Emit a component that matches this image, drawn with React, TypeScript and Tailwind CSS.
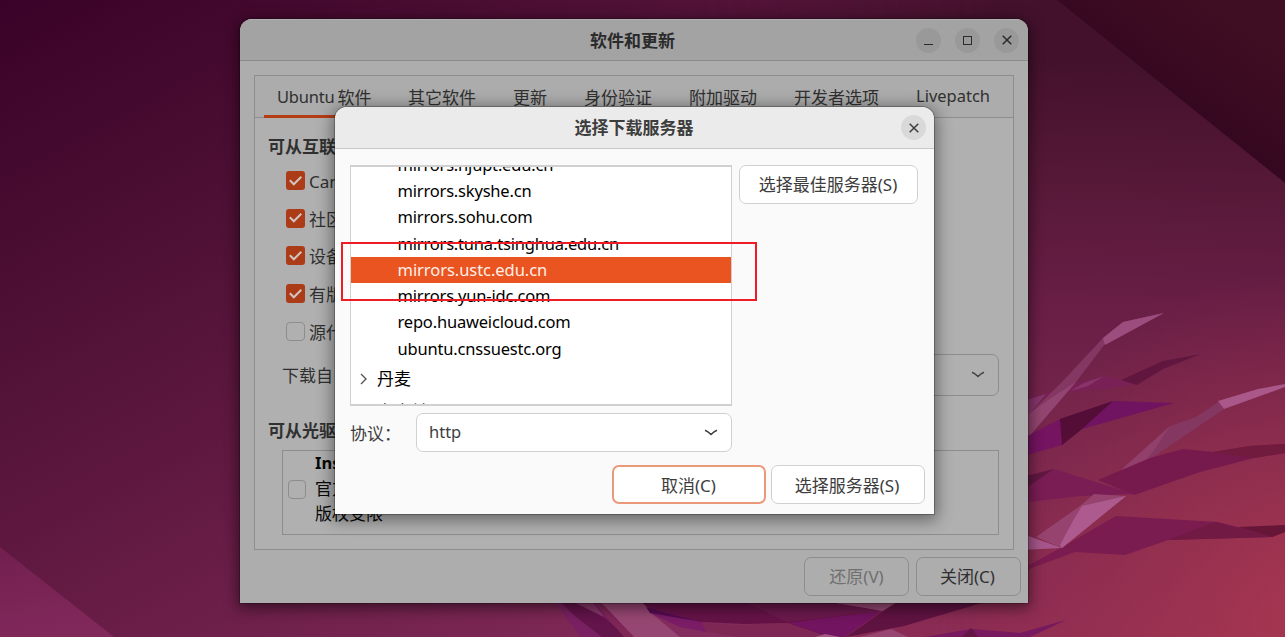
import React from "react";

const sans = "font-['Noto_Sans','Noto_Sans_CJK_SC',sans-serif]";

function Wallpaper() {
  return (
    <svg className="absolute inset-0" width="1285" height="637" viewBox="0 0 1285 637">
      <defs>
        <linearGradient id="base" gradientUnits="userSpaceOnUse" x1="0" y1="0" x2="420" y2="780">
          <stop offset="0" stopColor="#3a0228" />
          <stop offset="0.35" stopColor="#501136" />
          <stop offset="0.65" stopColor="#661c45" />
          <stop offset="1" stopColor="#822a58" />
        </linearGradient>
        <linearGradient id="right" gradientUnits="userSpaceOnUse" x1="1170" y1="60" x2="1150" y2="637">
          <stop offset="0" stopColor="#43112c" />
          <stop offset="0.2" stopColor="#551837" />
          <stop offset="0.42" stopColor="#681e45" />
          <stop offset="0.7" stopColor="#7b274e" />
          <stop offset="1" stopColor="#8d2c53" />
        </linearGradient>
        <linearGradient id="fade" gradientUnits="userSpaceOnUse" x1="700" y1="0" x2="1010" y2="0">
          <stop offset="0" stopColor="#fff" stopOpacity="0" />
          <stop offset="1" stopColor="#fff" />
        </linearGradient>
        <mask id="rightMask"><rect width="1285" height="637" fill="url(#fade)" /></mask>
        <radialGradient id="glow" gradientUnits="userSpaceOnUse" cx="1310" cy="610" r="340">
          <stop offset="0" stopColor="#b03a50" stopOpacity="0.75" />
          <stop offset="1" stopColor="#a8374d" stopOpacity="0" />
        </radialGradient>
        <linearGradient id="corner" gradientUnits="userSpaceOnUse" x1="1160" y1="85" x2="1220" y2="0">
          <stop offset="0" stopColor="#360820" />
          <stop offset="1" stopColor="#400e23" />
        </linearGradient>
        <linearGradient id="leftCorner" gradientUnits="userSpaceOnUse" x1="30" y1="550" x2="50" y2="637">
          <stop offset="0" stopColor="#732050" />
          <stop offset="1" stopColor="#81285b" />
        </linearGradient>
      </defs>
      <rect width="1285" height="637" fill="url(#base)" />
      <rect width="1285" height="637" fill="url(#right)" mask="url(#rightMask)" />
      <rect width="1285" height="637" fill="url(#glow)" />
      <polygon points="1057,0 1285,0 1285,183" fill="url(#corner)" />
      <polygon points="0,547 114,637 0,637" fill="url(#leftCorner)" />
      <polygon points="1020,400 1046,394 1062,386 1104,376 1121,380 1137,384 1102,389 1066,392 1028,400" fill="#792057" />
      <polygon points="1121,380 1163,361 1201,354 1163,369 1137,385" fill="#611640" />
      <polygon points="1070,391 1084,383 1104,376 1088,386" fill="#873569" />
      <polygon points="1020,402 1046,394 1028,416" fill="#85366c" />
      <polygon points="1020,423 1062,382 1103,338 1123,322 1163,313 1105,344 1076,382 1024,443" fill="#853763" />
      <polygon points="1103,338 1123,322 1164,313 1105,345" fill="#9d4c7e" />
      <polygon points="1020,420 1054,396 1076,382 1024,442" fill="#924570" />
      <polygon points="1020,440 1060,419 1062,445 1020,457" fill="#751461" />
      <polygon points="1060,419 1113,401 1174,403 1082,429 1062,445" fill="#701360" />
      <polygon points="1060,419 1113,401 1082,429 1062,445" fill="#540d37" />
      <polygon points="1120,471 1170,426 1196,417 1220,401 1224,409 1152,458" fill="#843760" />
      <polygon points="1120,471 1170,426 1154,450 1144,463" fill="#933f6b" />
      <polygon points="1218,401 1258,389 1285,384 1285,387 1224,409" fill="#aa5789" />
      <polygon points="1098,480 1150,458 1183,449 1213,452 1250,446 1285,444 1285,453 1254,458 1200,472 1134,495" fill="#76194c" />
      <polygon points="1213,452 1250,446 1285,444 1285,453 1254,458" fill="#711b3e" />
      <polygon points="1020,477 1054,469 1134,494 1080,496 1020,503" fill="#7a1d55" />
      <polygon points="1020,478 1054,469 1020,492" fill="#611842" />
      <polygon points="1064,546 1116,516 1218,522 1242,528 1285,525 1285,532 1272,537 1168,540 1125,555 1075,552 1026,570 1020,570" fill="#7b1c50" />
      <polygon points="1168,540 1215,522 1272,537" fill="#711a44" />
      <polygon points="1238,527 1285,525 1285,532 1272,537" fill="#681638" />
      <polygon points="1036,537 1080,506 1094,494 1126,496 1062,548" fill="#974370" />
      <polygon points="1082,506 1126,496 1062,548 1060,545 1074,519" fill="#ad5b8f" />
      <polygon points="1020,533 1062,548 1020,550" fill="#a6568a" />
      <polygon points="552,597 590,597 640,637 580,637" fill="#792062" />
      <polygon points="555,597 575,603 604,617 626,637 602,637 575,616" fill="#63144a" />
      <polygon points="568,599 590,599 604,617" fill="#873768" />
      <polygon points="590,597 597,602 634,637 624,637" fill="#7f2754" />
      <polygon points="596,597 645,597 650,612 704,637 634,637" fill="#964672" />
      <polygon points="650,612 740,622 800,637 680,637" fill="#832d5f" />
      <polygon points="636,597 890,597 858,623 840,633 808,637 788,623 745,624 700,622 647,607" fill="#651347" />
      <polygon points="735,597 790,603 840,604 882,611 786,622" fill="#6b194c" />
      <polygon points="646,607 701,622 702,626 650,613" fill="#540b50" />
      <polygon points="650,613 702,622 706,632 680,627" fill="#7b1c66" />
      <polygon points="702,623 740,625 788,623 830,637 740,637 706,632" fill="#7f2754" />
      <polygon points="788,623 882,611 845,637 832,637" fill="#72145f" />
      <polygon points="835,603 895,603 883,611" fill="#994a77" />
      <polygon points="883,611 898,602 985,602 904,626 846,637" fill="#5f1341" />
      <polygon points="925,637 971,629 1020,633 1066,620 1030,637" fill="#77195f" />
      <polygon points="962,637 971,628 978,637" fill="#631544" />
      <polygon points="815,637 825,634 840,637" fill="#a25a85" />
      <polygon points="872,634 891,629 908,637 860,637" fill="#964671" />
    </svg>
  );
}

function CloseIcon() {
  return (
    <svg width="10" height="10" viewBox="0 0 10 10" fill="none" stroke="currentColor" strokeWidth="1.5">
      <path d="M.7.7l8.6 8.6M9.3.7L.7 9.3" />
    </svg>
  );
}

function ChevronDown() {
  return (
    <svg width="14" height="8" viewBox="0 0 14 8" fill="none" stroke="currentColor" strokeWidth="1.5">
      <path d="M1 1.2c2 .8 4.3 2.600 6 4.300C8.700 3.800 11 2 13 1.200" />
    </svg>
  );
}

function Check({ label, on = false }: { label: string; on?: boolean }) {
  return (
    <div className="flex h-[37.7px] items-start">
      {on ? (
        <span className="flex h-[19px] w-[19px] shrink-0 items-center justify-center rounded-[3px] bg-[#ac3c17]">
          <svg width="13" height="10" viewBox="0 0 13 10" fill="none" stroke="#d0c5c0" strokeWidth="2">
            <path d="M.8 4.300l4 4L12.300.8" />
          </svg>
        </span>
      ) : (
        <span className="h-[19px] w-[19px] shrink-0 rounded-[4px] border border-[#8d8d8d]" />
      )}
      <span className="ml-[4px] whitespace-nowrap text-[17px] leading-[22px]">{label}</span>
    </div>
  );
}

const tabs = [
  { label: "其它软件", cls: "ml-[23px] w-[69px]" },
  { label: "更新", cls: "ml-[36px] w-[35px]" },
  { label: "身份验证", cls: "ml-[36px] w-[69px]" },
  { label: "附加驱动", cls: "ml-[36px] w-[69px]" },
  { label: "开发者选项", cls: "ml-[36px] w-[86px]" },
];

function MainWindow() {
  return (
    <div className="absolute left-[240px] top-[19px] flex h-[583.500px] w-[788px] flex-col overflow-hidden rounded-t-[12px] bg-[#adadad] text-[#303030] shadow-[0_3px_14px_2px_rgba(0,0,0,0.5),0_0_0_1px_rgba(0,0,0,0.2)]">
      <header className="flex h-[42px] shrink-0 items-center border-b border-t border-b-[#8b8b8b] border-t-[#b0b0b0] bg-[#a3a3a3] pr-[9px]">
        <div className="w-[109px]" />
        <h1 className="flex-1 pt-[2px] text-center text-[17px] font-bold leading-[24px] text-[#2b2b2b]">软件和更新</h1>
        <div className="flex gap-[14px] text-[#2b2b2b]">
          <span className="flex h-[25px] w-[25px] items-end justify-center rounded-full bg-[#999999] pb-[8px]"><i className="h-[1px] w-[9px] bg-[#2b2b2b]" /></span>
          <span className="flex h-[25px] w-[25px] items-center justify-center rounded-full bg-[#999999]"><i className="h-[9px] w-[9px] border-[1.500px] border-[#2b2b2b]" /></span>
          <span className="flex h-[25px] w-[25px] items-center justify-center rounded-full bg-[#999999]"><CloseIcon /></span>
        </div>
      </header>
      <section className="mx-[14px] mt-[14px] h-[475px] shrink-0 border border-[#8d8d8d] bg-[#b0b0b0]">
        <nav className="flex h-[42px] whitespace-nowrap border-b border-[#8d8d8d] bg-[#acacac] pl-[9px] text-[17px] leading-[43px]">
          <div className="-mb-px flex h-[42px] w-[121px] border-b-[3px] border-[#b53d14] pl-[13px]">
            <span className="text-[16.500px] leading-[42px] tracking-[-0.2px]">Ubuntu</span><span className="ml-[3px]">软件</span>
          </div>
          {tabs.map((t) => (
            <div key={t.label} className={t.cls}>{t.label}</div>
          ))}
          <div className="ml-[36px] text-[16.500px] leading-[40px]">Livepatch</div>
        </nav>
        <h2 className="ml-[13px] mt-[17px] text-[17px] font-bold leading-[24px]">可从互联网下载</h2>
        <div className="ml-[31px] mt-[12px]">
          <Check label="Canonical" on />
          <Check label="社区维护" on />
          <Check label="设备的专有驱动" on />
          <Check label="有版权问题" on />
          <Check label="源代码" />
        </div>
        <div className="-mt-[5.500px] mr-[14px] flex h-[42px] items-center justify-between pl-[27px] text-[17px]">
          <span className="pt-[2px]">下载自：</span>
          <div className="flex h-[42px] w-[300px] items-center justify-end rounded-[7px] border border-[#8d8d8d] pr-[13px] text-[#444]"><ChevronDown /></div>
        </div>
        <h2 className="ml-[13px] mt-[23px] text-[17px] font-bold leading-[24px]">可从光驱安装</h2>
        <div className="ml-[27px] mr-[14px] mt-[7px] flex h-[85.500px] items-center border border-[#8d8d8d] text-[17px] leading-[25.500px] text-[#080808]">
          <span className="ml-[5px] mt-[-7px] h-[19px] w-[18px] rounded-[4px] border border-[#8d8d8d]" />
          <div className="ml-[9px] mt-[-8px]">
            <div className="text-[16.500px] font-bold">Installation</div>
            <div>官方支持</div>
            <div>版权受限</div>
          </div>
        </div>
      </section>
      <footer className="flex gap-[7px] pl-[564px] pt-[7px] text-[17px]">
        <button className="h-[39px] w-[105px] rounded-[7px] border border-[#8d8d8d] text-[#707070]">还原(V)</button>
        <button className="h-[39px] w-[105px] rounded-[7px] border border-[#8d8d8d] pr-[2px]">关闭(C)</button>
      </footer>
    </div>
  );
}

const mirrors = [
  "mirrors.njupt.edu.cn",
  "mirrors.skyshe.cn",
  "mirrors.sohu.com",
  "mirrors.tuna.tsinghua.edu.cn",
  "mirrors.ustc.edu.cn",
  "mirrors.yun-idc.com",
  "repo.huaweicloud.com",
  "ubuntu.cnssuestc.org",
];

function ServerDialog() {
  return (
    <div className="absolute left-[335px] top-[107px] flex h-[406.500px] w-[599px] flex-col overflow-hidden rounded-t-[12px] bg-[#fafafa] text-[#3d3d3d] shadow-[0_3px_16px_3px_rgba(0,0,0,0.42),0_0_0_1px_rgba(0,0,0,0.25)]">
      <header className="flex h-[42px] shrink-0 items-center border-b border-[#c8c8c8] bg-[#ebebeb] pr-[8px]">
        <div className="w-[32px]" />
        <h1 className="flex-1 pt-[1px] text-center text-[17px] font-bold leading-[24px]">选择下载服务器</h1>
        <span className="flex h-[25px] w-[25px] items-center justify-center rounded-full bg-[#d9d9d9]"><CloseIcon /></span>
      </header>
      <div className="ml-[15px] mt-[16px] flex gap-[7px]">
        <div className="flex h-[241px] w-[382px] flex-col overflow-hidden border border-b-2 border-t-2 border-[#cfd0cf] bg-white text-black">
          <div className="-mt-[15.300px] text-[16.500px] leading-[26px] tracking-[-0.19px]">
            {mirrors.map((m) => (
              <div key={m} className={m === "mirrors.ustc.edu.cn" ? "h-[26.300px] whitespace-nowrap bg-[#e95420] pl-[46.500px] tracking-[-0.05px] text-[#fff0e8]" : "h-[26.300px] whitespace-nowrap pl-[46.500px]"}>{m}</div>
            ))}
          </div>
          <div className="flex h-[34px] shrink-0 items-center pl-[9px] text-[17px]">
            <svg width="8" height="12" viewBox="0 0 8 12" fill="none" stroke="#555" strokeWidth="1.400"><path d="M1 1l5 5-5 5" /></svg>
            <span className="ml-[9px]">丹麦</span>
          </div>
          <div className="mt-[3.500px] shrink-0 pl-[26px] text-[17px] leading-[24px]">乌克兰</div>
        </div>
        <button className="h-[39px] w-[179px] rounded-[7px] border border-[#cfd0cf] bg-white pr-[1px] pt-[1px] text-[17px]">选择最佳服务器(S)</button>
      </div>
      <div className="ml-[15px] mt-[7px] flex h-[39px] items-center text-[17px]">
        <span className="w-[66px] shrink-0 pt-[2px]">协议：</span>
        <div className="flex h-[39px] w-[316px] items-center justify-between rounded-[7px] border border-[#cfd0cf] bg-white pl-[12px] pr-[13px] text-[16.500px]"><span>http</span><ChevronDown /></div>
      </div>
      <div className="mr-[9px] mt-[13px] flex justify-end gap-[5px] text-[17px]">
        <button className="h-[39px] w-[154px] rounded-[7px] border-2 border-[#eb997b] bg-white pr-[1px] pt-[2px]">取消(C)</button>
        <button className="h-[39px] w-[154px] rounded-[7px] border border-[#cfd0cf] bg-white pr-[2px] pt-[2px]">选择服务器(S)</button>
      </div>
    </div>
  );
}

export default function App() {
  return (
    <div className={`relative h-[637px] w-[1285px] overflow-hidden ${sans}`}>
      <Wallpaper />
      <MainWindow />
      <ServerDialog />
      <div className="absolute left-[341px] top-[242px] h-[59px] w-[416px] border-2 border-[#ee1c25]" />
    </div>
  );
}
